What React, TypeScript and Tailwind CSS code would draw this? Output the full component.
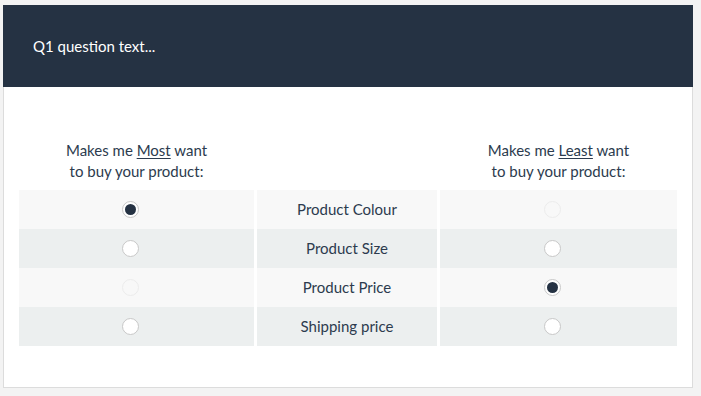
import React from "react";

type Row = { label: string; most: "on" | "off" | "disabled"; least: "on" | "off" | "disabled" };

const ROWS: Row[] = [
  { label: "Product Colour", most: "on", least: "disabled" },
  { label: "Product Size", most: "off", least: "off" },
  { label: "Product Price", most: "disabled", least: "on" },
  { label: "Shipping price", most: "off", least: "off" },
];

function Radio({ state }: { state: "on" | "off" | "disabled" }) {
  if (state === "disabled") {
    return <span className="block w-[17px] h-[17px] rounded-full border border-[#ececec]" />;
  }
  return (
    <span className="flex items-center justify-center w-[17px] h-[17px] rounded-full border border-[#c8c8c8] bg-white">
      {state === "on" && <span className="block w-[11px] h-[11px] rounded-full bg-[#253243]" />}
    </span>
  );
}

export default function App() {
  return (
    <div className="min-h-[396px] bg-[#f3f3f3] pt-[5px] pl-[3px] font-['Lato',sans-serif]">
      <div className="w-[690px] h-[383px] bg-white border-x border-b border-[#dcdcdc]">
        <div className="h-[82px] bg-[#253243] -mx-px flex items-center px-[30px]">
          <span className="text-white text-[15px]">Q1 question text...</span>
        </div>

        <div className="pt-[53px] px-[15px]">
          <div className="grid grid-cols-[235px_180px_237px] gap-x-[3px] text-[15px] leading-[21px] text-[#2c3b4e]">
            <div className="text-center pb-[8px]">
              Makes me <span className="underline underline-offset-2">Most</span> want
              <br />
              to buy your product:
            </div>
            <div />
            <div className="text-center pb-[8px]">
              Makes me <span className="underline underline-offset-2">Least</span> want
              <br />
              to buy your product:
            </div>

            {ROWS.map((row, idx) => {
              const bg = idx % 2 === 0 ? "bg-[#f8f8f8]" : "bg-[#ecefef]";
              return (
                <React.Fragment key={row.label}>
                  <div className={`${bg} h-[39px] flex items-center justify-center pr-[12px]`}>
                    <Radio state={row.most} />
                  </div>
                  <div className={`${bg} h-[39px] flex items-center justify-center`}>{row.label}</div>
                  <div className={`${bg} h-[39px] flex items-center justify-center pr-[12px]`}>
                    <Radio state={row.least} />
                  </div>
                </React.Fragment>
              );
            })}
          </div>
        </div>
      </div>
    </div>
  );
}
